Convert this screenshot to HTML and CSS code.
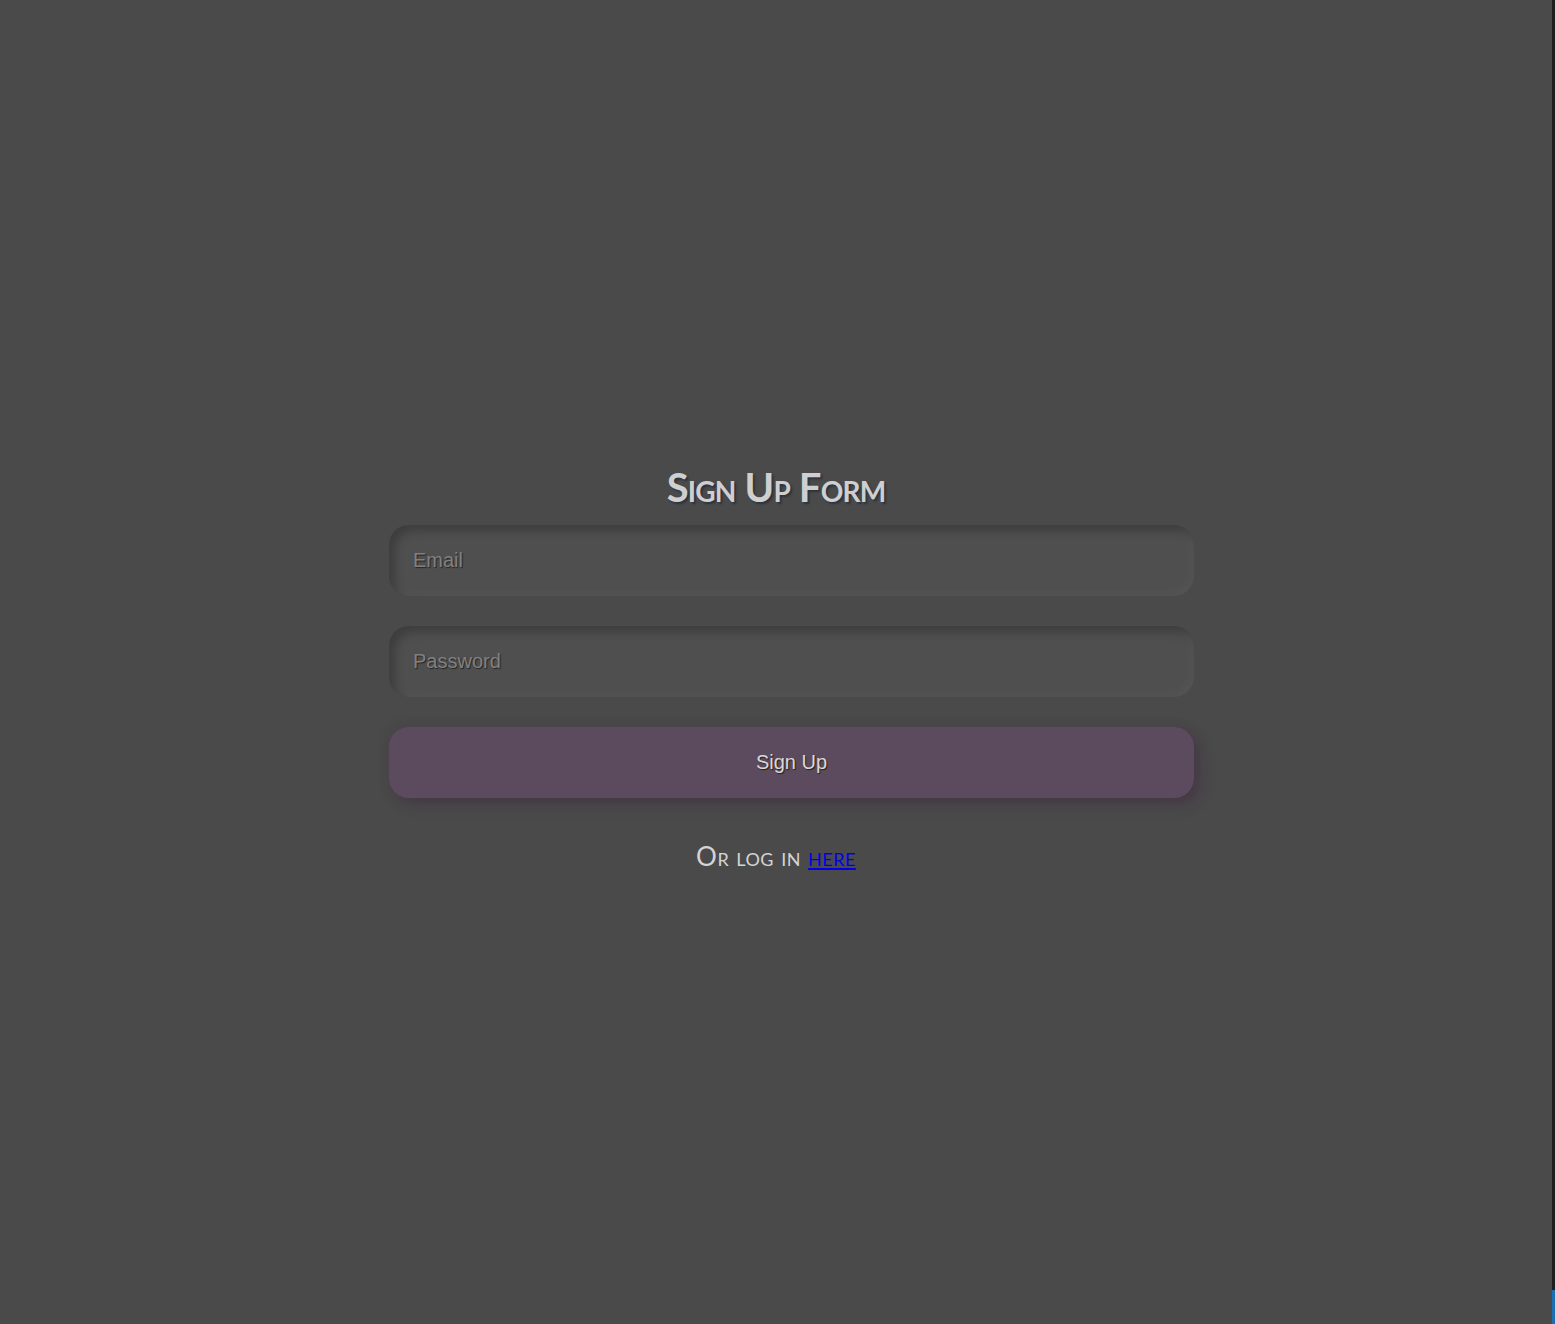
FILE: index.html
```html
<!DOCTYPE html>
<html lang="en">
<head>
<meta charset="utf-8">
<title>Sign Up Form</title>
<link rel="stylesheet" href="styles.css">
</head>
<body>
<main class="page">
  <form class="signup">
    <h1 class="title">Sign Up Form</h1>
    <input class="field" type="email" placeholder="Email">
    <input class="field" type="password" placeholder="Password">
    <button class="btn" type="button">Sign Up</button>
    <p class="alt">Or log in <a href="#" class="alt-link">here</a></p>
  </form>
</main>
<aside class="edge"><span class="edge-blue"></span></aside>
</body>
</html>
```

FILE: styles.css
```css
html, body {
  margin: 0;
  height: 100%;
}
body {
  display: flex;
  background: #4a4a4a;
  overflow: hidden;
}
.page {
  flex: 1;
  display: flex;
  justify-content: center;
  padding-top: 463px;
}
.edge {
  width: 3px;
  background: #1e1e1e;
  display: flex;
  flex-direction: column;
  justify-content: flex-end;
}
.edge-blue {
  height: 34px;
  background: #1a6fb0;
}
.signup {
  width: 774px;
  display: flex;
  flex-direction: column;
  align-items: flex-start;
}
.title {
  align-self: stretch;
  margin: 0 0 14px;
  text-align: center;
  font-family: "Lato", "DejaVu Sans", sans-serif;
  font-variant: small-caps;
  font-weight: 700;
  font-size: 40px;
  line-height: 48px;
  letter-spacing: -0.8px;
  color: #cfcfcf;
  text-shadow: 2px 2px 2px #2c3440;
}
.field, .btn {
  box-sizing: border-box;
  width: 805px;
  height: 71px;
  border: 0;
  border-radius: 20px;
  outline: none;
  font-family: "Liberation Sans", Arial, sans-serif;
  font-size: 20px;
}
.field {
  margin-bottom: 30px;
  padding: 0 24px;
  background: #4f4f4f;
  color: #cfcfcf;
  box-shadow: inset 6px 6px 10px rgba(0, 0, 0, 0.22), inset -4px -4px 8px rgba(255, 255, 255, 0.03);
}
.field::placeholder {
  color: #808080;
  text-shadow: 1px 1px 1px #252525;
}
.btn {
  background: #5c4a5e;
  color: #d8d8d8;
  text-shadow: 1px 1px 1px #2a2014;
  box-shadow: 6px 6px 14px rgba(60, 30, 60, 0.35), -3px -3px 10px rgba(80, 60, 80, 0.2);
  cursor: pointer;
}
.alt {
  align-self: stretch;
  margin: 42px 0 0;
  text-align: center;
  font-family: "Lato", "DejaVu Sans", sans-serif;
  font-variant: small-caps;
  font-size: 26px;
  letter-spacing: 0.5px;
  color: #d4d4d4;
}
.alt-link {
  color: #0000ee;
}
```
